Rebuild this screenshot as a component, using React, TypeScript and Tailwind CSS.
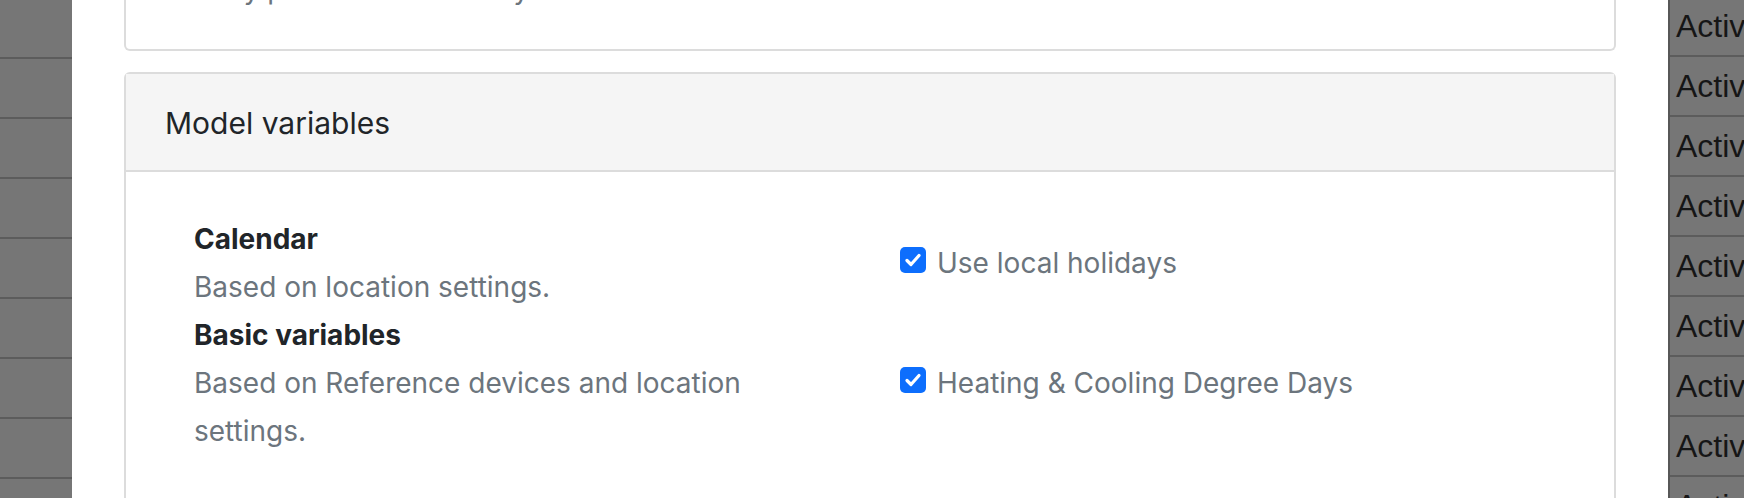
import React from "react";

const rows = Array.from({ length: 9 });

const variables = [
  {
    title: "Calendar",
    description: "Based on location settings.",
    option: "Use local holidays",
  },
  {
    title: "Basic variables",
    description: "Based on Reference devices and location settings.",
    option: "Heating & Cooling Degree Days",
  },
];

function CheckBox() {
  return (
    <span className="mb-[6px] flex h-[26px] w-[26px] shrink-0 items-center justify-center rounded-[5px] bg-[#0d6efd]">
      <svg width="20" height="20" viewBox="0 0 20 20" fill="none">
        <path
          d="M4 10.5l4 4 8-9"
          stroke="white"
          strokeWidth="3.2"
          strokeLinecap="round"
          strokeLinejoin="round"
        />
      </svg>
    </span>
  );
}

export default function App() {
  return (
    <div className="flex h-[498px] w-[1744px] overflow-hidden bg-white font-['Inter',sans-serif]">
      {/* backdrop over the table, left side */}
      <div className="-mt-px flex w-[72px] shrink-0 flex-col bg-[#767676]">
        {rows.map((_, i) => (
          <div key={i} className="h-[60px] shrink-0 border-b-2 border-[#5c5c5c]" />
        ))}
      </div>

      {/* modal body */}
      <div className="flex flex-1 flex-col gap-[21px] px-[52px]">
        <div className="-mt-[35px] rounded-b-[6px] border-2 border-t-0 border-[#dcdcdc] pb-[36px] pl-[68px]">
          <p className="text-[28px] leading-[48px] text-[#6c757d]">
            Daily profiles are used by the model.
          </p>
        </div>

        <div className="rounded-t-[6px] border-2 border-[#dcdcdc]">
          <div className="border-b-2 border-[#dcdcdc] bg-[#f5f5f5] pt-[31px] pb-[29px] pl-[39px]">
            <h5 className="text-[30px] leading-[36px] text-[#212529]">Model variables</h5>
          </div>
          <div className="flex flex-col pt-[43px] pb-[80px] pl-[68px]">
            {variables.map((v) => (
              <div key={v.title} className="grid grid-cols-[600px_1fr] items-center gap-x-[106px]">
                <div className="flex flex-col text-[28px] leading-[48px]">
                  <span className="font-bold text-[#212529]">{v.title}</span>
                  <span className="text-[#6c757d]">{v.description}</span>
                </div>
                <label className="flex items-center gap-[11px] text-[28px] leading-[36px] text-[#6c757d]">
                  <CheckBox />
                  {v.option}
                </label>
              </div>
            ))}
          </div>
        </div>
      </div>

      {/* backdrop over the table, right side */}
      <div className="-mt-[3px] flex w-[76px] shrink-0 flex-col border-l-2 border-[#575757] bg-[#767676]">
        {rows.map((_, i) => (
          <div
            key={i}
            className="flex h-[60px] shrink-0 items-center overflow-hidden whitespace-nowrap border-b-2 border-[#5c5c5c] pl-[6px] font-['Liberation_Sans',sans-serif] text-[32px] text-[#161616]"
          >
            Active
          </div>
        ))}
      </div>
    </div>
  );
}
